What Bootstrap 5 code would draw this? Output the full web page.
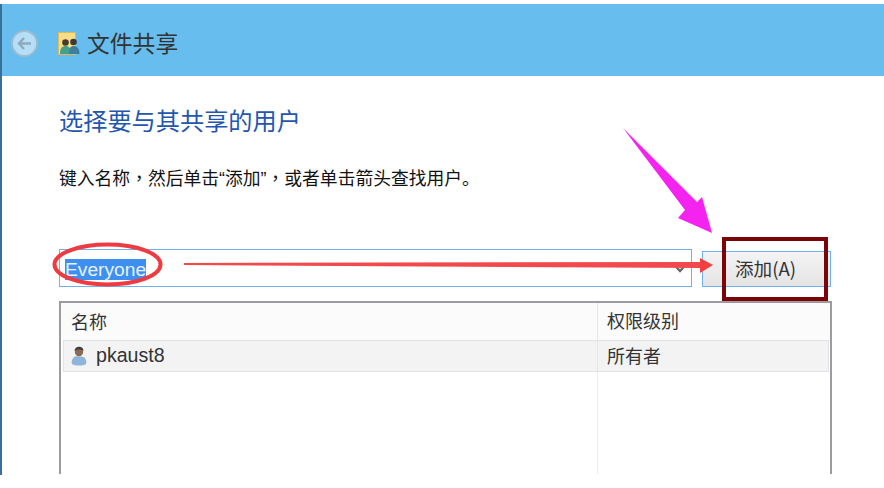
<!DOCTYPE html>
<html lang="zh">
<head>
<meta charset="utf-8">
<title>文件共享</title>
<link rel="stylesheet" href="https://cdn.jsdelivr.net/npm/bootstrap@5.3.0/dist/css/bootstrap.min.css">
<style>
html,body{background:#fff;margin:0;height:488px;overflow:hidden}
body{font-family:"Noto Sans CJK SC","Liberation Sans",sans-serif;color:#222}
.shell{position:relative;width:884px;margin-top:4px;border-left:2px solid #3a6f96;height:471px}
.head-bar{height:72px;background:#66bdee;padding:6px 0 0 9px;gap:20px}
.back-btn{width:27px;height:27px;border-radius:50%;background:#b5dff7;border:2px solid #9dbccf;flex:none}
.head-title{font-size:22.8px;color:#333;margin-left:-14px;line-height:1}
.content{padding:30px 52px 0 57px}
.page-title{font-size:24.2px;font-weight:400;color:#2456b0;line-height:28px;margin:0}
.hint{font-size:17.8px;line-height:22px;height:22px;color:#111;margin:32px 0 0}
.hint .tc-mark{font-family:"Noto Sans CJK TC",sans-serif}
.hint .latin-mark{font-family:"Liberation Sans",sans-serif}
.input-row{margin-top:61px;gap:10px;align-items:flex-end}
.name-box{width:633px;height:38px;border:1px solid #6fb1ee;padding-left:5px;font-size:19.2px;line-height:36px;position:relative}
.sel-text{background:#3d8ff0;color:#e8f2ff;font-family:"Liberation Sans",sans-serif;display:inline-block;height:21px;line-height:21px}
.caret-ic{position:absolute;right:4px;top:14px}
.add-btn{width:129px;height:36px;border:1px solid #6fb1ee;border-radius:0;background:linear-gradient(#f4f4f4,#e4e4e4);font-size:18.6px;color:#333;padding:0 2px 2px 0;line-height:32px}
.user-table{margin-top:14px;width:773px;height:173px;border:2px solid #9b9ba0;border-bottom:0;background:#fff}
.tbl-head{height:37px;background:#fbfbfc;font-size:18px;color:#333;align-items:center}
.col-a{width:536px;padding-left:10px;flex:none}
.col-b{padding-left:9px;flex:1}
.tbl-row{height:32px;margin:0 1px 0 2px;background:#f3f3f3;border:1px solid #dfe3e8;font-size:18px;color:#333;align-items:center}
.tbl-row .col-a{width:533px;padding-left:7px;display:flex;align-items:center;gap:9px;font-family:"Liberation Sans",sans-serif;font-size:19.6px}
.tbl-head .col-b,.tbl-row .col-b{border-left:1px solid #e3e8ee;height:100%;display:flex;align-items:center;padding-bottom:2px}
.tbl-rest{position:relative;height:102px}
.tbl-rest .v-line{height:100%;width:1px;background:#e8f0f6;margin-left:536px}
.marks{position:absolute;left:-2px;top:-4px;width:884px;height:488px;pointer-events:none}
</style>
</head>
<body>
<div class="shell">
  <header class="head-bar d-flex align-items-center">
    <span class="back-btn d-flex align-items-center justify-content-center">
      <svg width="15" height="13" viewBox="0 0 15 13"><path d="M7 1 2 6.500 7 12M2 6.500H14" fill="none" stroke="#8fa9ba" stroke-width="2.400"/></svg>
    </span>
    <svg width="23" height="23" viewBox="0 0 23 23">
      <rect x="0.500" y="0.500" width="17" height="22" fill="#f6dd88" stroke="#dcb95a"/>
      <circle cx="7.500" cy="10.500" r="3.300" fill="#4b3a2c"/><path d="M2 22c0-6 2-8 5.500-8s5.500 2 5.500 8z" fill="#43a08a"/>
      <circle cx="15.500" cy="10" r="3.300" fill="#3e3a36"/><path d="M11 22c0-6 1.500-8 4.500-8s6 2 6 8z" fill="#3d7f9c"/>
    </svg>
    <span class="head-title">文件共享</span>
  </header>
  <main class="content">
    <h1 class="page-title">选择要与其共享的用户</h1>
    <p class="hint">键入名称<span class="tc-mark" lang="zh-Hant">，</span>然后单击<span class="latin-mark">“</span>添加<span class="latin-mark">”</span><span class="tc-mark" lang="zh-Hant">，</span>或者单击箭头查找用户。</p>
    <div class="input-row d-flex">
      <div class="name-box"><span class="sel-text">Everyone</span>
        <svg class="caret-ic" width="14" height="9" viewBox="0 0 14 9"><path d="M2 1.500 7 7l5-5.500" fill="none" stroke="#666" stroke-width="2.200"/></svg>
      </div>
      <button type="button" class="btn add-btn">添加(A)</button>
    </div>
    <section class="user-table">
      <div class="tbl-head d-flex"><div class="col-a">名称</div><div class="col-b">权限级别</div></div>
      <div class="tbl-row d-flex">
        <div class="col-a">
          <svg width="16" height="21" viewBox="0 0 16 21"><path d="M3 12c0-1 6-1 10 0 2 2 3 5 2 7-3 2-11 2-14 0-1-2 0-5 2-7z" fill="#8db5da"/><circle cx="8" cy="7" r="4.200" fill="#8a6a52"/><path d="M3.500 6c0-5 9-6 9 0-2-2-7-2-9 0z" fill="#3f3f42"/></svg>
          <span>pkaust8</span>
        </div>
        <div class="col-b">所有者</div>
      </div>
      <div class="tbl-rest"><div class="v-line"></div></div>
    </section>
  </main>
  <svg class="marks" viewBox="0 0 884 488" aria-hidden="true">
    <ellipse cx="107.500" cy="264.500" rx="53" ry="20" fill="none" stroke="#ee3b42" stroke-width="4"/>
    <path d="M184 263 L700 262 L700 268 L184 265Z" fill="#f2494d"/>
    <path d="M700 258 L713 265 L700 273Z" fill="#f24040"/>
    <path d="M623 128 L697 202 L702 197 L712 233 L678 218 L685 210Z" fill="#f423f0"/>
    <rect x="724" y="239" width="102" height="60" fill="none" stroke="#7a0408" stroke-width="4"/>
  </svg>
</div>
</body>
</html>
